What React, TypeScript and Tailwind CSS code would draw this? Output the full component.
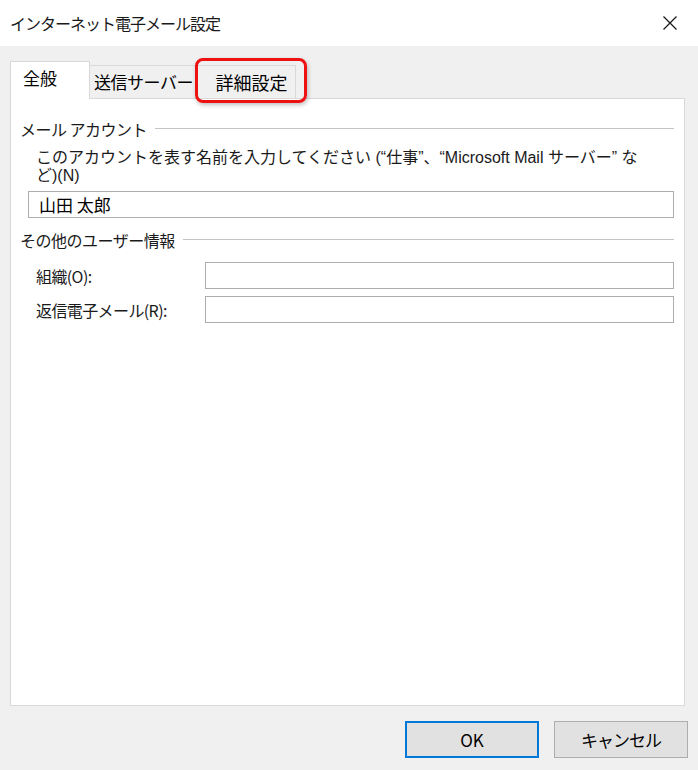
import React from "react";

const font = { fontFamily: '"Noto Sans CJK JP", "Noto Sans", sans-serif' } as React.CSSProperties;
const descFont = { fontFamily: '"Liberation Sans", "Noto Sans CJK JP", sans-serif' } as React.CSSProperties;

function GroupHeader({ label }: { label: string }) {
  return (
    <div className="flex items-center gap-[8px]">
      <span className="whitespace-nowrap text-[16px] leading-[20px] text-[#1a1a1a] tracking-[-0.5px]">{label}</span>
      <div className="flex-1 h-[2px] border-t border-[#c4c4c4] border-b-white" />
    </div>
  );
}

export default function App() {
  return (
    <div className="w-[698px] h-[770px] bg-[#f0f0f0] flex flex-col overflow-hidden" style={font}>
      {/* Title bar */}
      <div className="h-[46px] bg-white flex items-center justify-between pl-[10px] pr-[18px] shrink-0">
        <span className="text-[16px] leading-none text-[#1a1a1a] tracking-[-1px]">インターネット電子メール設定</span>
        <svg width="16" height="16" viewBox="0 0 16 16" className="mr-[2px]">
          <path d="M1.5 1.5 L14.5 14.5 M14.5 1.5 L1.5 14.5" stroke="#1a1a1a" strokeWidth="1.3" fill="none" />
        </svg>
      </div>

      {/* Body */}
      <div className="flex-1 flex flex-col px-[10px] pt-[14px]">
        {/* Tabs */}
        <div className="flex items-end h-[38px] relative z-10">
          <div className="w-[80px] h-[38px] bg-white border border-[#d9d9d9] border-b-0 flex items-start pl-[12px] pt-[4px] -mb-px">
            <span className="text-[17px] leading-[24px] text-black">全般</span>
          </div>
          <div className="w-[108px] h-[33px] bg-[#f0f0f0] border border-[#d9d9d9] border-l-0 border-b-0 flex items-center justify-center">
            <span className="text-[17px] leading-[24px] text-black tracking-[-0.5px] whitespace-nowrap">送信サーバー</span>
          </div>
          <div className="relative w-[98px] h-[33px] bg-[#f0f0f0] border border-[#d9d9d9] border-l-0 border-b-0 flex items-center justify-center">
            <span className="text-[18px] leading-[24px] text-black pl-[10px] whitespace-nowrap">詳細設定</span>
            <div className="absolute left-[-3px] right-[-12px] top-[-8px] bottom-[-5px] border-[3px] border-[#ee1111] rounded-[8px] shadow-[1px_2px_4px_rgba(0,0,0,0.25)] pointer-events-none" />
          </div>
        </div>

        {/* Panel */}
        <div className="h-[608px] bg-white border border-[#d9d9d9] flex flex-col pl-[9px] pr-[10px] pt-[20px] mr-[3px]">
          <GroupHeader label="メール アカウント" />
          <div className="pl-[16px] pt-[10px]">
            <div className="text-[16px] leading-[18px] text-[#1a1a1a] whitespace-nowrap" style={descFont}>
              <div>このアカウントを表す名前を入力してください (“仕事”、“Microsoft Mail サーバー” な</div>
              <div>ど)(N)</div>
            </div>
          </div>
          <div className="pl-[8px] pt-[6px]">
            <div className="h-[27px] border border-[#adadad] flex items-center pl-[10px]">
              <span className="text-[17px] leading-none text-black">山田 太郎</span>
            </div>
          </div>

          <div className="pt-[12px]">
            <GroupHeader label="その他のユーザー情報" />
          </div>
          <div className="flex flex-col gap-[7px] pt-[12px] pl-[16px]">
            <div className="flex items-center">
              <span className="w-[169px] text-[16px] leading-[20px] text-[#1a1a1a] tracking-[-0.6px]">組織(O):</span>
              <div className="flex-1 h-[27px] border border-[#adadad]" />
            </div>
            <div className="flex items-center">
              <span className="w-[169px] text-[16px] leading-[20px] text-[#1a1a1a] tracking-[-0.6px] whitespace-nowrap">返信電子メール(R):</span>
              <div className="flex-1 h-[27px] border border-[#adadad]" />
            </div>
          </div>
        </div>

        {/* Buttons */}
        <div className="flex justify-end gap-[15px] pt-[15px] pr-0">
          <button className="w-[134px] h-[37px] bg-[#e1e1e1] border-2 border-[#0078d7] text-[17px] text-black leading-none">
            OK
          </button>
          <button className="w-[134px] h-[37px] bg-[#e1e1e1] border border-[#adadad] text-[17px] text-black leading-none tracking-[-1px]">
            キャンセル
          </button>
        </div>
      </div>
    </div>
  );
}
